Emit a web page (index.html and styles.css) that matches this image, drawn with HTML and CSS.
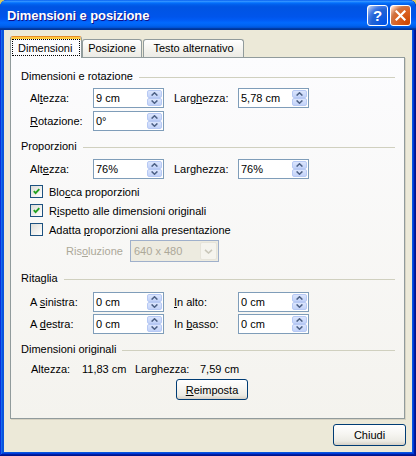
FILE: index.html
```html
<!DOCTYPE html>
<html lang="it">
<head>
<meta charset="utf-8">
<title>Dimensioni e posizione</title>
<link rel="stylesheet" href="styles.css">
</head>
<body>
<div class="window">
  <div class="titlebar">
    <span class="title">Dimensioni e posizione</span>
    <div class="tb-btns">
      <span class="tb-btn help">?</span>
      <span class="tb-btn close"><svg width="11" height="11" viewBox="0 0 11 11"><path d="M1.5 1.5 L9.5 9.5 M9.5 1.5 L1.5 9.5" stroke="#fff" stroke-width="2.2" stroke-linecap="square"/></svg></span>
    </div>
  </div>
  <div class="client">
    <div class="tabs">
      <div class="tab active"><span class="focus">Dimensioni</span></div>
      <div class="tab t2">Posizione</div>
      <div class="tab t3">Testo alternativo</div>
    </div>
    <div class="panel">
      <div class="ghead">Dimensioni e rotazione</div>
      <div class="row r1">
        <span class="lbl">Al<u>t</u>ezza:</span>
        <div class="spin"><span class="v">9 cm</span><span class="sbs"><span class="sb"><svg width="7" height="4" viewBox="0 0 7 4"><path d="M0.6 3.6 L3.5 0.8 L6.4 3.6" fill="none" stroke="#4d6185" stroke-width="1.5"/></svg></span><span class="sb"><svg width="7" height="4" viewBox="0 0 7 4"><path d="M0.6 0.4 L3.5 3.2 L6.4 0.4" fill="none" stroke="#4d6185" stroke-width="1.5"/></svg></span></span></div>
        <span class="lbl rl">Larg<u>h</u>ezza:</span>
        <div class="spin"><span class="v">5,78 cm</span><span class="sbs"><span class="sb"><svg width="7" height="4" viewBox="0 0 7 4"><path d="M0.6 3.6 L3.5 0.8 L6.4 3.6" fill="none" stroke="#4d6185" stroke-width="1.5"/></svg></span><span class="sb"><svg width="7" height="4" viewBox="0 0 7 4"><path d="M0.6 0.4 L3.5 3.2 L6.4 0.4" fill="none" stroke="#4d6185" stroke-width="1.5"/></svg></span></span></div>
      </div>
      <div class="row r2">
        <span class="lbl"><u>R</u>otazione:</span>
        <div class="spin"><span class="v">0°</span><span class="sbs"><span class="sb"><svg width="7" height="4" viewBox="0 0 7 4"><path d="M0.6 3.6 L3.5 0.8 L6.4 3.6" fill="none" stroke="#4d6185" stroke-width="1.5"/></svg></span><span class="sb"><svg width="7" height="4" viewBox="0 0 7 4"><path d="M0.6 0.4 L3.5 3.2 L6.4 0.4" fill="none" stroke="#4d6185" stroke-width="1.5"/></svg></span></span></div>
      </div>

      <div class="ghead g2">Proporzioni</div>
      <div class="row r3">
        <span class="lbl">Alt<u>e</u>zza:</span>
        <div class="spin"><span class="v">76%</span><span class="sbs"><span class="sb"><svg width="7" height="4" viewBox="0 0 7 4"><path d="M0.6 3.6 L3.5 0.8 L6.4 3.6" fill="none" stroke="#4d6185" stroke-width="1.5"/></svg></span><span class="sb"><svg width="7" height="4" viewBox="0 0 7 4"><path d="M0.6 0.4 L3.5 3.2 L6.4 0.4" fill="none" stroke="#4d6185" stroke-width="1.5"/></svg></span></span></div>
        <span class="lbl rl">Lar<u>g</u>hezza:</span>
        <div class="spin"><span class="v">76%</span><span class="sbs"><span class="sb"><svg width="7" height="4" viewBox="0 0 7 4"><path d="M0.6 3.6 L3.5 0.8 L6.4 3.6" fill="none" stroke="#4d6185" stroke-width="1.5"/></svg></span><span class="sb"><svg width="7" height="4" viewBox="0 0 7 4"><path d="M0.6 0.4 L3.5 3.2 L6.4 0.4" fill="none" stroke="#4d6185" stroke-width="1.5"/></svg></span></span></div>
      </div>
      <div class="chk c1"><span class="box"><svg width="7" height="7" viewBox="0 0 7 7"><path d="M0.8 3.2 L2.6 5.2 L6.3 1.2" fill="none" stroke="#21a121" stroke-width="1.9"/></svg></span><span>Blo<u>c</u>ca proporzioni</span></div>
      <div class="chk"><span class="box"><svg width="7" height="7" viewBox="0 0 7 7"><path d="M0.8 3.2 L2.6 5.2 L6.3 1.2" fill="none" stroke="#21a121" stroke-width="1.9"/></svg></span><span>R<u>i</u>spetto alle dimensioni originali</span></div>
      <div class="chk"><span class="box"></span><span>Adatta <u>p</u>roporzioni alla presentazione</span></div>
      <div class="combo-row">
        <span class="dis">Ris<u>o</u>luzione</span>
        <div class="combo"><span class="cv">640 x 480</span><span class="cbtn"><svg width="9" height="5" viewBox="0 0 9 5"><path d="M1 0.8 L4.5 4 L8 0.8" fill="none" stroke="#c9c7ba" stroke-width="1.6"/></svg></span></div>
      </div>

      <div class="ghead g3">Ritaglia</div>
      <div class="row r4">
        <span class="lbl">A <u>s</u>inistra:</span>
        <div class="spin"><span class="v">0 cm</span><span class="sbs"><span class="sb"><svg width="7" height="4" viewBox="0 0 7 4"><path d="M0.6 3.6 L3.5 0.8 L6.4 3.6" fill="none" stroke="#4d6185" stroke-width="1.5"/></svg></span><span class="sb"><svg width="7" height="4" viewBox="0 0 7 4"><path d="M0.6 0.4 L3.5 3.2 L6.4 0.4" fill="none" stroke="#4d6185" stroke-width="1.5"/></svg></span></span></div>
        <span class="lbl rl"><u>I</u>n alto:</span>
        <div class="spin"><span class="v">0 cm</span><span class="sbs"><span class="sb"><svg width="7" height="4" viewBox="0 0 7 4"><path d="M0.6 3.6 L3.5 0.8 L6.4 3.6" fill="none" stroke="#4d6185" stroke-width="1.5"/></svg></span><span class="sb"><svg width="7" height="4" viewBox="0 0 7 4"><path d="M0.6 0.4 L3.5 3.2 L6.4 0.4" fill="none" stroke="#4d6185" stroke-width="1.5"/></svg></span></span></div>
      </div>
      <div class="row r5">
        <span class="lbl">A <u>d</u>estra:</span>
        <div class="spin"><span class="v">0 cm</span><span class="sbs"><span class="sb"><svg width="7" height="4" viewBox="0 0 7 4"><path d="M0.6 3.6 L3.5 0.8 L6.4 3.6" fill="none" stroke="#4d6185" stroke-width="1.5"/></svg></span><span class="sb"><svg width="7" height="4" viewBox="0 0 7 4"><path d="M0.6 0.4 L3.5 3.2 L6.4 0.4" fill="none" stroke="#4d6185" stroke-width="1.5"/></svg></span></span></div>
        <span class="lbl rl">In <u>b</u>asso:</span>
        <div class="spin"><span class="v">0 cm</span><span class="sbs"><span class="sb"><svg width="7" height="4" viewBox="0 0 7 4"><path d="M0.6 3.6 L3.5 0.8 L6.4 3.6" fill="none" stroke="#4d6185" stroke-width="1.5"/></svg></span><span class="sb"><svg width="7" height="4" viewBox="0 0 7 4"><path d="M0.6 0.4 L3.5 3.2 L6.4 0.4" fill="none" stroke="#4d6185" stroke-width="1.5"/></svg></span></span></div>
      </div>

      <div class="ghead g4">Dimensioni originali</div>
      <div class="orig">
        <span class="o1">Altezza:</span>
        <span class="o2">11,83 cm</span>
        <span class="o3">Larghezza:</span>
        <span>7,59 cm</span>
      </div>
      <div class="reset-row"><span class="btn reset"><u>R</u>eimposta</span></div>
    </div>
    <div class="footer"><span class="btn close-btn">Chiudi</span></div>
  </div>
</div>
</body>
</html>
```
FILE: styles.css
```css
* { box-sizing: border-box; }
html, body { margin: 0; padding: 0; }
body {
  width: 416px; height: 456px; overflow: hidden;
  background: #d9c85a;
  font-family: "Liberation Sans", Arial, sans-serif;
  font-size: 11px; color: #000;
}
u { text-decoration: underline; text-underline-offset: 1px; }

.window {
  width: 416px; height: 456px;
  display: flex; flex-direction: column;
  background: #0855dd;
  border-radius: 7px 7px 0 0;
  padding: 0 4px 4px 4px;
  box-shadow: inset -1px -1px #00138c, inset 1px 1px #0831d9, inset -2px -2px #001ea0, inset 2px 2px #166aee, inset -3px -3px #003bda;
}

.titlebar {
  height: 30px; margin: 0 -4px; flex: none;
  padding: 0 5px 0 7px;
  display: flex; align-items: center;
  border-radius: 7px 7px 0 0;
  background: linear-gradient(180deg, #0058ee 0%, #3593ff 4%, #288eff 6%, #127dff 8%, #036ffc 10%, #0262ee 14%, #0057e5 20%, #0054e3 24%, #0055eb 56%, #005bf5 66%, #026afe 76%, #0062ef 86%, #0052d6 92%, #0040ab 94%, #003092 100%);
}
.title {
  flex: 1; color: #fff; font-weight: bold; font-size: 13px;
  letter-spacing: -0.1px;
  text-shadow: 1px 1px #0f1089;
  padding-top: 1px;
}
.tb-btns { display: flex; gap: 2px; }
.tb-btn {
  width: 21px; height: 21px;
  border: 1px solid #fff; border-radius: 3px;
  display: flex; align-items: center; justify-content: center;
  color: #fff; font-weight: bold; font-size: 15px; line-height: 1;
}
.help { background: radial-gradient(circle at 90% 90%, #0054e9 0%, #2263d5 55%, #4479e4 70%, #a3bbec 90%, #fff 100%); }
.close { background: radial-gradient(circle at 90% 90%, #cc4600 0%, #dc6527 55%, #cd7546 70%, #ffccb2 90%, #fff 100%); }

.client {
  flex: 1; background: #ece9d8;
  padding: 6px 7px 0 6px;
  display: flex; flex-direction: column;
}

.tabs { display: flex; align-items: flex-end; height: 21px; position: relative; z-index: 1; }
.tab {
  height: 18px;
  border: 1px solid #919b9c; border-bottom: none;
  border-radius: 3px 3px 0 0;
  background: linear-gradient(180deg, #fff, #f3f2ed 60%, #ecebe6);
  display: flex; align-items: center; justify-content: center;
  padding-bottom: 1px;
}
.tab.active {
  width: 72px; height: 22px; margin-bottom: -1px;
  background: #fcfcfe;
  border-top: 1px solid #e68b2c;
  box-shadow: inset 0 2px #ffc83c;
  align-items: flex-start; padding: 2px 0 0 0;
}
.t2 { width: 60px; }
.t3 { width: 101px; margin-left: 1px; }
.focus {
  width: 68px; height: 17px;
  border: 1px dotted #000;
  display: flex; align-items: center; padding-left: 5px;
}

.panel {
  height: 362px; flex: none;
  border: 1px solid #919b9c;
  background: linear-gradient(180deg, #fcfcfe, #f4f3ee);
  box-shadow: 1px 1px 0 #d6d2c2;
  padding: 12px 9px 0 10px;
}

.ghead { display: flex; align-items: center; height: 13px; line-height: 13px; }
.ghead::after { content: ""; flex: 1; height: 1px; background: #d0d0bf; margin-left: 6px; margin-top: 1px; }
.g2 { margin-top: 9px; }
.g3 { margin-top: 10px; }
.g4 { margin-top: 9px; }

.row { display: flex; align-items: center; height: 20px; padding-left: 9px; }
.r1 { margin-top: 5px; }
.r2 { margin-top: 3px; }
.r3 { margin-top: 6px; }
.r4 { margin-top: 7px; }
.r5 { margin-top: 2px; }
.lbl { width: 63px; }
.rl { width: 64px; margin-left: 10px; }

.spin {
  width: 71px; height: 20px;
  border: 1px solid #7f9db9; background: #fff;
  display: flex; padding: 1px;
}
.v { flex: 1; padding-left: 1px; line-height: 16px; }
.sbs { width: 15px; display: flex; flex-direction: column; }
.sb {
  flex: 1;
  border: 1px solid #b7c9f4; border-radius: 2px;
  background: linear-gradient(180deg, #dbe5fd, #c2d2f8);
  display: flex; align-items: center; justify-content: center;
}
.sb svg { display: block; }

.chk { display: flex; align-items: center; height: 19px; padding-left: 9px; }
.c1 { margin-top: 3px; }
.box {
  width: 13px; height: 13px; margin-right: 6px;
  border: 1px solid #1c5180;
  background: linear-gradient(135deg, #dcdcd7, #fff);
  display: flex; align-items: center; justify-content: center;
}
.box svg { display: block; }

.combo-row { display: flex; align-items: center; height: 22px; margin-top: 1px; padding-left: 45px; }
.dis { width: 64px; color: #aca899; }
.combo {
  width: 89px; height: 22px;
  border: 1px solid #9fb0cb;
  background: #edebe0;
  display: flex; padding: 1px;
}
.cv { flex: 1; color: #aca899; padding-left: 2px; line-height: 18px; }
.cbtn {
  width: 17px;
  background: #f5f4ee; border: 1px solid #e6e4da; border-radius: 2px;
  display: flex; align-items: center; justify-content: center;
}

.orig { display: flex; height: 13px; line-height: 13px; margin-top: 7px; padding-left: 10px; }
.o1 { width: 51px; }
.o2 { width: 53px; }
.o3 { width: 65px; }

.reset-row { display: flex; margin-top: 3px; padding-left: 155px; }
.btn {
  height: 21px; width: 72px;
  border: 1px solid #003c74; border-radius: 3px;
  background: linear-gradient(180deg, #fff 0%, #f6f5f1 45%, #ecebe4 80%, #d6d0c5 100%);
  display: flex; align-items: center; justify-content: center;
}
.footer { display: flex; justify-content: flex-end; margin-top: 5px; margin-right: -1px; }
.close-btn { width: 73px; height: 22px; }
```
